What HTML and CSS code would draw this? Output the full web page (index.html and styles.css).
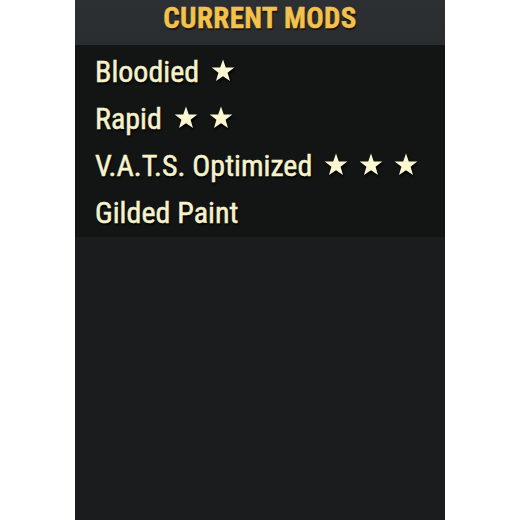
FILE: index.html
```html
<!DOCTYPE html>
<html>
<head>
<meta charset="utf-8">
<link rel="stylesheet" href="styles.css">
</head>
<body>
<div class="panel">
  <div class="header"><h1 class="title">CURRENT MODS</h1></div>
  <ul class="mods">
    <li class="mod">Bloodied<span class="stars"><svg class="star" viewBox="0 0 24 23"><path d="M12 0.5 L14.8 8.4 L23.3 8.6 L16.6 13.8 L19 22 L12 17.2 L5 22 L7.4 13.8 L0.7 8.6 L9.2 8.4 Z"/></svg></span></li>
    <li class="mod">Rapid<span class="stars"><svg class="star" viewBox="0 0 24 23"><path d="M12 0.5 L14.8 8.4 L23.3 8.6 L16.6 13.8 L19 22 L12 17.2 L5 22 L7.4 13.8 L0.7 8.6 L9.2 8.4 Z"/></svg><svg class="star" viewBox="0 0 24 23"><path d="M12 0.5 L14.8 8.4 L23.3 8.6 L16.6 13.8 L19 22 L12 17.2 L5 22 L7.4 13.8 L0.7 8.6 L9.2 8.4 Z"/></svg></span></li>
    <li class="mod">V.A.T.S. Optimized<span class="stars"><svg class="star" viewBox="0 0 24 23"><path d="M12 0.5 L14.8 8.4 L23.3 8.6 L16.6 13.8 L19 22 L12 17.2 L5 22 L7.4 13.8 L0.7 8.6 L9.2 8.4 Z"/></svg><svg class="star" viewBox="0 0 24 23"><path d="M12 0.5 L14.8 8.4 L23.3 8.6 L16.6 13.8 L19 22 L12 17.2 L5 22 L7.4 13.8 L0.7 8.6 L9.2 8.4 Z"/></svg><svg class="star" viewBox="0 0 24 23"><path d="M12 0.5 L14.8 8.4 L23.3 8.6 L16.6 13.8 L19 22 L12 17.2 L5 22 L7.4 13.8 L0.7 8.6 L9.2 8.4 Z"/></svg></span></li>
    <li class="mod">Gilded Paint</li>
  </ul>
  <div class="rest"></div>
</div>
</body>
</html>
```
FILE: styles.css
```css
html, body { margin: 0; padding: 0; background: #ffffff; }
body { width: 520px; height: 520px; display: flex; justify-content: flex-start; }
.panel {
  margin-left: 75px;
  width: 370px;
  height: 520px;
  display: flex;
  flex-direction: column;
  background: #1b1c1e;
}
.header {
  height: 45px;
  box-sizing: border-box;
  background: linear-gradient(#2d3033, #2a2d30);
  display: flex;
  justify-content: center;
  align-items: flex-start;
}
.title {
  margin: 0;
  font-family: "Roboto Condensed", "Liberation Sans Narrow", "DejaVu Sans Condensed", "Roboto", sans-serif;
  font-stretch: condensed;
  font-weight: bold;
  font-size: 29px;
  line-height: 36px;
  letter-spacing: 0.3px;
  color: #f2c24f;
  -webkit-text-stroke: 0.4px #f2c24f;
  text-shadow: 1px 2px 1px #1a1208;
}
.mods {
  list-style: none;
  margin: 0;
  padding: 3px 0 0 20px;
  background: #131515;
  height: 189px;
}
.mod {
  font-family: "Roboto Condensed", "Liberation Sans Narrow", "DejaVu Sans Condensed", "Roboto", sans-serif;
  font-stretch: condensed;
  font-weight: 400;
  font-size: 30px;
  line-height: 47px;
  height: 47px;
  color: #f6f2cc;
  -webkit-text-stroke: 0.5px #f6f2cc;
  text-shadow: 1px 2px 2px #000;
  white-space: nowrap;
}
.stars { display: inline-flex; gap: 11px; margin-left: 12px; vertical-align: baseline; }
.star {
  width: 24px;
  height: 23px;
  fill: #fbf7d0;
  filter: drop-shadow(1px 2px 1px #000);
}
.rest { flex: 1; }
```
